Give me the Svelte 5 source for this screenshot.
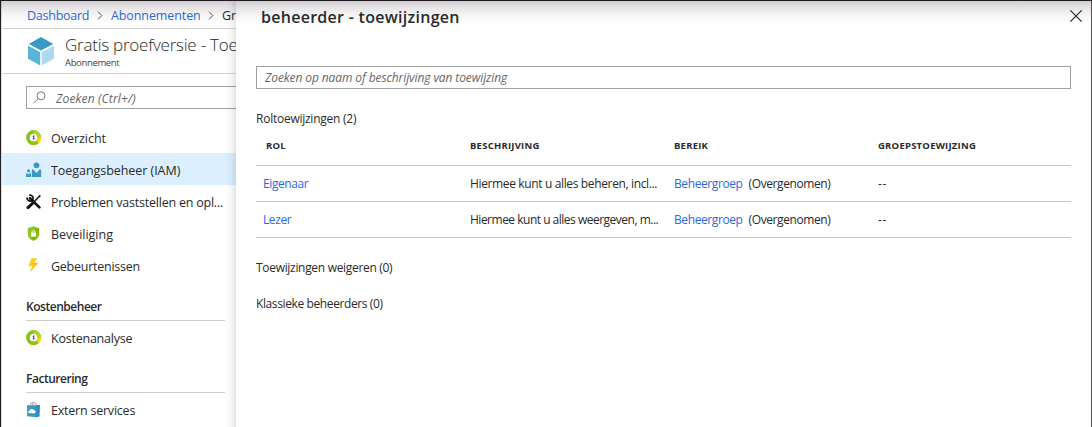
<script>
  const general = [
    { icon: 'cost', label: 'Overzicht', spacing: -0.02 },
    { icon: 'people', label: 'Toegangsbeheer (IAM)', spacing: -0.05, active: true },
    { icon: 'tools', label: 'Problemen vaststellen en opl...', spacing: -0.22 },
    { icon: 'shield', label: 'Beveiliging', spacing: -0.03 },
    { icon: 'bolt', label: 'Gebeurtenissen', spacing: -0.25 }
  ];
  const sections = [
    { title: 'Kostenbeheer', item: { icon: 'cost', label: 'Kostenanalyse', spacing: -0.23 } },
    { title: 'Facturering', item: { icon: 'bag', label: 'Extern services', spacing: -0.22 } }
  ];
  const rows = [
    { role: 'Eigenaar', text: 'Hiermee kunt u alles beheren, incl...', spacing: -0.36 },
    { role: 'Lezer', text: 'Hiermee kunt u alles weergeven, m...', spacing: -0.5 }
  ];
</script>

{#snippet glyph(name)}
  <svg class="glyph" viewBox="0 0 16 16" width="16" height="16">
    {#if name === 'cost'}
      <circle cx="7.6" cy="7.6" r="5.7" fill="#fff" stroke="#8bc220" stroke-width="3.7" />
      <path d="M7.6 1.9A5.7 5.7 0 0 1 13.3 7.6" fill="none" stroke="#b0d136" stroke-width="3.7" />
      <path d="M13.3 7.6A5.7 5.7 0 0 1 11.3 11.9" fill="none" stroke="#fcd116" stroke-width="3.7" />
      <path d="M8.6 6.4C7.9 5.8 6.7 6.1 6.8 6.9C7 7.7 8.5 7.5 8.5 8.4C8.5 9.3 7.2 9.3 6.6 8.8M7.6 5.3V9.9" fill="none" stroke="#444" stroke-width=".7" />
    {:else if name === 'people'}
      <circle cx="10.5" cy="3.3" r="2.9" fill="#3999c6" />
      <path d="M5.8 15V8.4Q5.8 7.2 7.2 7.2L10.5 11L13.8 7.2Q15.2 7.2 15.2 8.4V15Z" fill="#3999c6" />
      <circle cx="2.6" cy="8.8" r="1.6" fill="#3999c6" />
      <path d="M.1 15V11.9Q.1 11 1 11L2.6 12.6L4.2 11Q5 11 5 11.9V15Z" fill="#3999c6" />
    {:else if name === 'tools'}
      <path d="M4 4.2L13.4 13.4" stroke="#111" stroke-width="2.7" stroke-linecap="round" />
      <path d="M3.2 1.3A3 3 0 1 1 1.2 3.5" fill="none" stroke="#111" stroke-width="1.7" />
      <path d="M14 1.7L8.8 7.1" stroke="#111" stroke-width="1.4" />
      <path d="M8 8L2 13.6" stroke="#111" stroke-width="3" stroke-linecap="round" />
      <path d="M12.3 1.8L14.4 .9L14.7 1.4L13.5 3.2Z" fill="#111" />
    {:else if name === 'shield'}
      <path d="M7.6 .2C9.4 1.5 11.1 1.9 13.1 1.9V7.5C13.1 11.1 10.6 13.5 7.6 14.9C4.6 13.5 1.9 11.1 1.9 7.5V1.9C4.1 1.9 5.8 1.5 7.6 .2Z" fill="#7fba00" />
      <path d="M7.6 .2C5.8 1.5 4.1 1.9 1.9 1.9V7.5C1.9 10 3.1 11.8 4.8 13.2L10.6 1.4C9.6 1.3 8.6 .9 7.6 .2Z" fill="#8fc422" />
      <rect x="5" y="6.7" width="5.1" height="4" fill="#fff" />
      <path d="M6.2 7V5.6A1.4 1.4 0 0 1 8.9 5.6V7" fill="none" stroke="#fff" stroke-width="1" />
    {:else if name === 'bolt'}
      <path d="M5.4 .2H11L8 5H12L3.8 14.5L6 8.3H2.4Z" fill="#fcd116" />
      <path d="M11 .2L8 5H12L3.8 14.5L8.9 6.8H5Z" fill="#ffb81c" />
    {:else}
      <path d="M4.4 4.4V2.6Q4.4 .7 6.2 .7H8.2Q10 .7 10 2.6V4.4M6.8 4V1.4" fill="none" stroke="#999" stroke-width="1" />
      <path d="M1 3.3H13.8L13.3 14.2L10.5 15.2L1.2 14.3Z" fill="#3999c6" />
      <path d="M10.7 3.3H13.8L13.3 14.2L10.5 15.2Z" fill="#2e8cbc" />
      <path d="M3.6 11.2C1.7 11 2 8.6 3.6 8.7C4.1 6.4 7.2 6.5 7.6 8.3C9.7 8.1 10.2 10.8 8.5 11.2Z" fill="#fff" />
    {/if}
  </svg>
{/snippet}

{#snippet navItem(item)}
  <a class="item" class:active={item.active} href="#nav">
    {@render glyph(item.icon)}
    <span style="letter-spacing: {item.spacing}px">{item.label}</span>
  </a>
{/snippet}

{#snippet chevron()}
  <svg class="chevron" viewBox="0 0 6 9" width="6" height="9"><path d="M1 .7L4.8 4.5L1 8.3" fill="none" stroke="#555" stroke-width="1" /></svg>
{/snippet}

<div class="window">
  <aside class="menu">
    <nav class="crumbs">
      <a class="c1" href="#d">Dashboard</a>{@render chevron()}<a class="c2" href="#a">Abonnementen</a>{@render chevron()}<span>Gr</span>
    </nav>
    <header class="resource">
      <svg viewBox="0 0 26 29" width="26" height="29">
        <path d="M13 0L25.3 6.9L13 13.6L.8 6.9Z" fill="#3999c6" />
        <path d="M0 8.4L12.2 15.2V28.6L0 21.7Z" fill="#59b4d9" />
        <path d="M26 8.4L13.8 15.2V28.6L26 21.7Z" fill="#acd9ee" />
      </svg>
      <div class="names">
        <h1>Gratis proefversie - Toe</h1>
        <p>Abonnement</p>
      </div>
    </header>
    <div class="find">
      <svg viewBox="0 0 13 13" width="13" height="13"><circle cx="8" cy="4.8" r="4" fill="none" stroke="#777" /><path d="M5.1 7.7L.5 12.2" stroke="#777" /></svg>
      <span>Zoeken (Ctrl+/)</span>
    </div>
    <div class="list">
      {#each general as item}{@render navItem(item)}{/each}
    </div>
    {#each sections as section}
      <h2>{section.title}</h2>
      {@render navItem(section.item)}
    {/each}
  </aside>

  <main class="panel">
    <header class="top">
      <h3>beheerder - toewijzingen</h3>
      <svg viewBox="0 0 12 12" width="12" height="12"><path d="M.3 .3L11.7 11.7M11.7 .3L.3 11.7" stroke="#222" stroke-width="1.1" /></svg>
    </header>
    <div class="filter">Zoeken op naam of beschrijving van toewijzing</div>
    <p class="group first">Roltoewijzingen (2)</p>
    <div class="row head">
      <span class="rol">ROL</span><span>BESCHRIJVING</span><span>BEREIK</span><span>GROEPSTOEWIJZING</span>
    </div>
    {#each rows as row}
      <div class="row">
        <a class="role" href="#r">{row.role}</a>
        <span style="letter-spacing: {row.spacing}px">{row.text}</span>
        <span class="scope"><a href="#b">Beheergroep</a><span>(Overgenomen)</span></span>
        <span class="none">--</span>
      </div>
    {/each}
    <p class="group deny">Toewijzingen weigeren (0)</p>
    <p class="group classic">Klassieke beheerders (0)</p>
  </main>
  <div class="shade"></div>
</div>

<style>
  :global(body) { margin: 0; }
  * { box-sizing: border-box; }
  .window {
    position: relative;
    display: flex;
    width: 1092px;
    height: 427px;
    overflow: hidden;
    border-top: 1px solid #201c20;
    border-left: 1px solid #201c20;
    background: #fff;
    color: #2a2a2a;
    font: 12.5px "Open Sans", "Noto Sans", sans-serif;
    white-space: nowrap;
  }
  h1, h2, h3, p { margin: 0; font-weight: 400; }
  a { color: #2a6ae0; text-decoration: none; }
  svg { flex: none; display: block; }
  .shade {
    position: absolute;
    inset: 0 0 auto 0;
    height: 23px;
    pointer-events: none;
    background: linear-gradient(rgba(45, 30, 45, .22), rgba(45, 30, 45, .13) 25%, rgba(45, 30, 45, .04) 65%, transparent);
  }
  .menu {
    position: relative;
    width: 235px;
    flex: none;
    overflow: hidden;
    border-left: 1px solid #ddd;
  }
  .menu::after {
    content: "";
    position: absolute;
    inset: 0 0 0 auto;
    width: 11px;
    background: linear-gradient(90deg, transparent, rgba(0, 0, 0, .03) 50%, rgba(0, 0, 0, .1));
  }
  .crumbs {
    display: flex;
    align-items: center;
    height: 28px;
    padding: 2px 0 0 25px;
    border-bottom: 1px solid #d0d0d0;
  }
  .c1 { flex: none; width: 70px; letter-spacing: -.25px; }
  .c2 { flex: none; width: 97px; letter-spacing: -.1px; }
  .chevron { margin-right: 8px; }
  .resource {
    display: flex;
    height: 45px;
    padding: 8px 0 0 26px;
    border-bottom: 1px solid #d0d0d0;
  }
  .names { padding-left: 11px; margin-top: -3px; }
  h1 { font-size: 17px; line-height: 22px; letter-spacing: -.24px; font-weight: 350; }
  .names p { font-size: 9.5px; line-height: 13px; color: #444; letter-spacing: -.35px; }
  .find {
    display: flex;
    align-items: center;
    width: 230px;
    height: 23px;
    margin: 12px 0 0 24px;
    padding-left: 6px;
    gap: 10px;
    border: 1px solid #a0a0a0;
    font-style: italic;
    font-size: 12px;
    letter-spacing: .15px;
    color: #666;
  }
  .find span { padding-top: 1px; }
  .list { padding-top: 12px; }
  .item {
    display: flex;
    align-items: center;
    height: 32px;
    padding-left: 24px;
    gap: 9px;
    color: #2a2a2a;
  }
  .glyph { margin-top: 1px; }
  .item span { padding-top: 3px; }
  .active { background: #dceffe; }
  h2 {
    width: 199px;
    height: 40px;
    margin: 0 0 0 24px;
    padding-top: 18px;
    border-bottom: 1px solid #cecece;
    font-size: 12px;
    line-height: 16px;
    font-weight: 600;
    letter-spacing: -.47px;
  }
  .panel { flex: 1; padding: 0 20px; border-right: 1px solid #555; background: #fff; }
  .top { display: flex; justify-content: space-between; height: 65px; padding: 5px 0 0 5px; }
  .top svg { margin: 4px -11px 0 0; }
  h3 { font-size: 16px; line-height: 22px; font-weight: 600; letter-spacing: .28px; }
  .filter {
    height: 23px;
    padding-left: 8px;
    border: 1px solid #a0a0a0;
    font-style: italic;
    font-size: 12px;
    line-height: 22px;
    letter-spacing: -.1px;
    color: #666;
  }
  .group { height: 18px; font-size: 12px; line-height: 19px; letter-spacing: -.25px; }
  .first { margin-top: 20px; }
  .deny { margin-top: 20px; letter-spacing: -.31px; }
  .classic { margin-top: 18px; letter-spacing: -.39px; }
  .row {
    display: grid;
    grid-template-columns: 214px 204px 204px 1fr;
    align-items: center;
    height: 36px;
    font-size: 12px;
    letter-spacing: -.4px;
    border-bottom: 1px solid #c8c8c8;
  }
  .head { height: 39px; padding: 0 0 2px; font-size: 9.5px; font-weight: 700; letter-spacing: .23px; }
  .none { letter-spacing: .6px; }
  .rol { padding-left: 10px; }
  .role { padding-left: 7px; }
  .scope { display: flex; gap: 6px; }
</style>
